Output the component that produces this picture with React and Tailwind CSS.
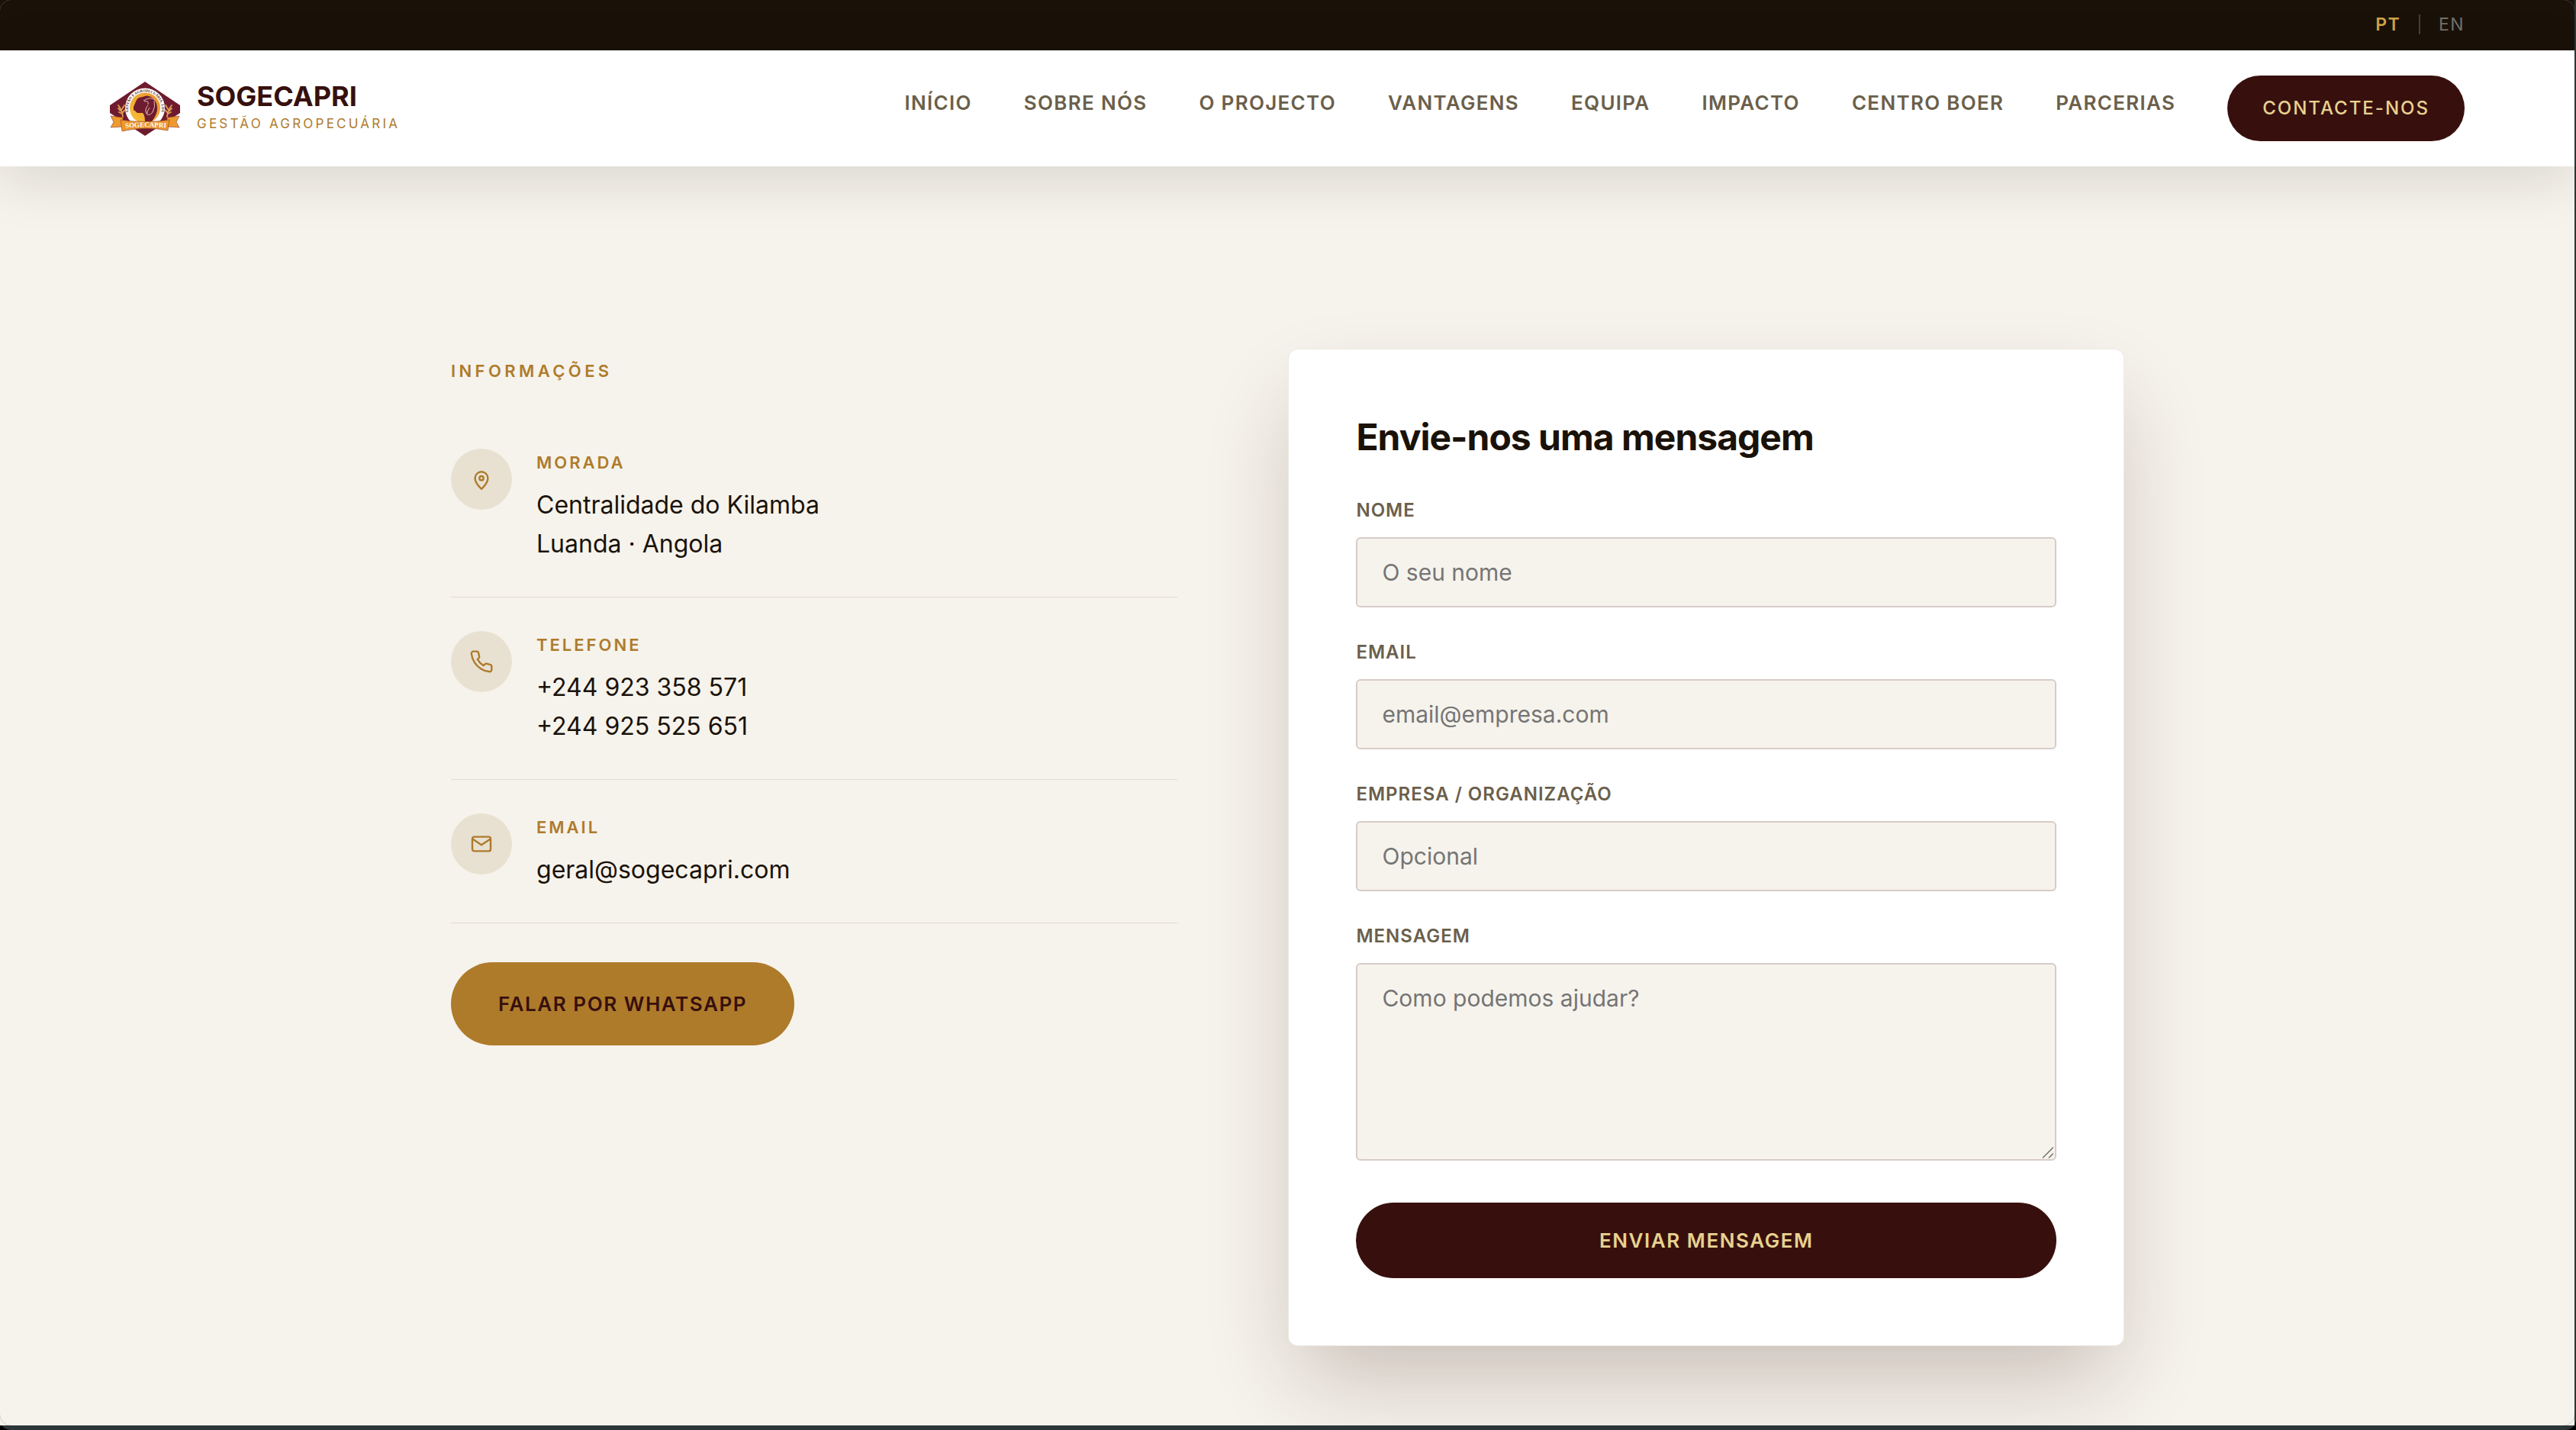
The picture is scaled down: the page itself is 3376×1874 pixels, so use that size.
import { useState } from 'react';

const navItems = [
    { label: 'Início', path: '#inicio' },
    { label: 'Sobre Nós', path: '#sobre' },
    { label: 'O Projecto', path: '#projecto' },
    { label: 'Vantagens', path: '#vantagens' },
    { label: 'Equipa', path: '#equipa' },
    { label: 'Impacto', path: '#impacto' },
    { label: 'Centro Boer', path: '#centro-boer' },
    { label: 'Parcerias', path: '#parcerias' },
];

const PinIcon = () => (
    <svg className="size-8" viewBox="0 0 24 24" fill="none" stroke="currentColor" strokeWidth="1.8">
        <path d="M12 21.500s-6.300-5.500-6.300-10.500a6.300 6.300 0 0 1 12.600 0c0 5-6.300 10.500-6.300 10.500z" />
        <circle cx="12" cy="11" r="2" />
    </svg>
);

const PhoneIcon = () => (
    <svg className="size-8" viewBox="0 0 24 24" fill="none" stroke="currentColor" strokeWidth="1.8" strokeLinejoin="round">
        <path d="M22 16.920v3a2 2 0 0 1-2.180 2 19.790 19.790 0 0 1-8.630-3.070 19.500 19.500 0 0 1-6-6 19.790 19.790 0 0 1-3.070-8.670A2 2 0 0 1 4.110 2h3a2 2 0 0 1 2 1.720c.127.960.361 1.903.700 2.810a2 2 0 0 1-.450 2.110L8.090 9.910a16 16 0 0 0 6 6l1.270-1.270a2 2 0 0 1 2.110-.450c.907.339 1.850.573 2.810.700A2 2 0 0 1 22 16.920z" />
    </svg>
);

const MailIcon = () => (
    <svg className="size-8" viewBox="0 0 24 24" fill="none" stroke="currentColor" strokeWidth="1.8">
        <rect x="3" y="5" width="18" height="14" rx="2" />
        <path d="M3 7l9 6 9-6" />
    </svg>
);

const contacts = [
    { label: 'Morada', lines: ['Centralidade do Kilamba', 'Luanda · Angola'], icon: PinIcon },
    { label: 'Telefone', lines: ['+244 923 358 571', '+244 925 525 651'], icon: PhoneIcon },
    { label: 'Email', lines: ['geral@sogecapri.com'], icon: MailIcon },
];

const fields = [
    { id: 'nome', label: 'Nome', type: 'text', placeholder: 'O seu nome' },
    { id: 'email', label: 'Email', type: 'email', placeholder: 'email@empresa.com' },
    { id: 'empresa', label: 'Empresa / Organização', type: 'text', placeholder: 'Opcional' },
];

function Logo() {
    return (
        <svg className="w-[92px] h-[71px]" viewBox="0 0 92 71">
            <defs>
                <path id="ring-arc" d="M25 42A22 22 0 1 1 67 42" />
                <path id="ribbon-arc" d="M19 61Q46 58 75 60.500" />
                <linearGradient id="gold" x1="0" y1="1" x2="1" y2="0">
                    <stop offset="0" stopColor="#F8C23A" />
                    <stop offset="1" stopColor="#E8912A" />
                </linearGradient>
            </defs>
            <path d="M46 0L92 31V41L46 71L0 41V31Z" fill="#6F1B2F" />
            {/* Ribbon tails */}
            <path d="M1 45L17 47V59L1 60L5 53Z" fill="#EE9A2E" stroke="#8A3A2A" strokeWidth="0.600" />
            <path d="M91 45L75 47V59L91 60L87 53Z" fill="#EE9A2E" stroke="#8A3A2A" strokeWidth="0.600" />
            {/* Wheat */}
            <g fill="none" stroke="#DDA052" strokeWidth="1.800" strokeLinecap="round">
                <path d="M17 46Q16 37 11 31M11 35l3 3M19 31l-3 5M12 40l4 2M20 37l-4 4" />
                <path d="M75 46Q76 37 81 31M81 35l-3 3M73 31l3 5M80 40l-4 2M72 37l4 4" />
            </g>
            {/* Medallion */}
            <circle cx="46" cy="34.500" r="26" fill="#FFF" />
            <circle cx="46" cy="34.500" r="20" fill="url(#gold)" />
            <path d="M31 33L34 26Q36 20 43 20Q50 16 57 22Q63 29 62 38Q60 46 55 52H46Q46 44 43 41L36 41Q33 38 31 37Z" fill="#6F1B2F" />
            <path d="M44 25Q53 19 59 24M45 26Q51 24 50 30M58 25Q60 33 56 40Q51 46 48 42Q45 36 50 31M52 34Q48 39 49 42" fill="none" stroke="#F5E6D8" strokeWidth="0.800" />
            <text className="font-['Liberation_Serif',serif] font-bold" fontSize="4.800" fill="#4B1B25">
                <textPath href="#ring-arc" startOffset="50%" textAnchor="middle">GESTÃO E AGROPECUÁRIA, LDA</textPath>
            </text>
            {/* Ribbon */}
            <path d="M14 50Q46 55 78 50L76 64Q46 58 16 65Z" fill="#EC962D" stroke="#8A3A2A" strokeWidth="0.600" />
            <text className="font-['Liberation_Serif',serif] font-bold" fontSize="9" fill="#FFF">
                <textPath href="#ribbon-arc" startOffset="50%" textAnchor="middle">SOGECAPRI</textPath>
            </text>
        </svg>
    );
}

export default function App() {
    const [lang, setLang] = useState('PT');

    return (
        <div className="min-h-screen flex flex-col bg-black font-['Inter',sans-serif] antialiased text-[#1A1209]">
            <div className="flex-1 flex flex-col rounded-b-[14px] bg-[#2C3537] pr-[2px] pb-[6px]">
                <div className="flex-1 flex flex-col relative overflow-hidden bg-[#F6F3EC]">
                    {/* Window edge, only its corners stay visible */}
                    <span className="absolute -inset-px rounded-[16px] border border-[#8080804D] pointer-events-none" />

                    {/* Top bar */}
                    <div className="h-[66px] px-36 pb-[2px] bg-[#1A1209] flex items-center justify-end gap-6 text-[23px] tracking-[0.06em]">
                        <button type="button" onClick={() => setLang('PT')} className={lang === 'PT' ? 'font-semibold text-[#CFA347]' : 'text-[#74706A]'}>PT</button>
                        <span className="w-[2px] h-[26px] bg-[#483F36]" />
                        <button type="button" onClick={() => setLang('EN')} className={lang === 'EN' ? 'font-semibold text-[#CFA347]' : 'text-[#74706A]'}>EN</button>
                    </div>

                    {/* Header */}
                    <header className="h-[152px] px-36 bg-white flex items-center justify-between shadow-[0_16px_72px_rgba(26,18,8,0.13)]">
                        <a href="#inicio" className="flex items-center gap-[22px]">
                            <Logo />
                            <span className="flex flex-col gap-2 pb-1">
                                <span className="text-4xl leading-9 font-bold text-[#37100D]">SOGECAPRI</span>
                                <span className="text-[17px] leading-5 tracking-[0.19em] uppercase text-[#AE7B2B]">Gestão Agropecuária</span>
                            </span>
                        </a>
                        <nav className="flex items-center gap-[68px]">
                            {navItems.map((item) => (
                                <a key={item.path} href={item.path} className="pb-[14px] text-[26px] leading-8 font-semibold tracking-[0.05em] uppercase text-[#6B5F4B]">
                                    {item.label}
                                </a>
                            ))}
                            <a href="#contacto" className="h-[86px] px-[46px] rounded-full bg-[#37100D] flex items-center text-2xl font-medium tracking-[2px] uppercase text-[#E8D28F]">
                                Contacte-nos
                            </a>
                        </nav>
                    </header>

                    {/* Contact section */}
                    <main className="flex-1 w-full max-w-[2192px] mx-auto pt-60 pb-[105px] grid grid-cols-[952fr_1093fr] gap-[146px] items-start">
                        <section className="pt-[10px]">
                            <h2 className="mb-10 text-[22px] leading-9 font-semibold tracking-[0.2em] uppercase text-[#AE7B2B]">Informações</h2>
                            {contacts.map(({ label, lines, icon: Icon }) => (
                                <div key={label} className="flex items-start gap-8 py-11 border-b border-[#DFDBD4]">
                                    <div className="size-20 rounded-full bg-[#E8E1D2] text-[#AE7B2B] flex items-center justify-center">
                                        <Icon />
                                    </div>
                                    <div>
                                        <h3 className="mb-3 text-[22px] leading-9 font-semibold tracking-[3px] uppercase text-[#AE7B2B]">{label}</h3>
                                        {lines.map((line) => (
                                            <p key={line} className="text-[32px] leading-[51px]">{line}</p>
                                        ))}
                                    </div>
                                </div>
                            ))}
                            <a href="#whatsapp" className="mt-[51px] h-[109px] px-[62px] rounded-full bg-[#AE7B2B] inline-flex items-center text-[26px] font-semibold tracking-[0.06em] uppercase text-[#37100D]">
                                Falar por WhatsApp
                            </a>
                        </section>

                        <form
                            onSubmit={(e) => e.preventDefault()}
                            className="p-[88px] rounded-xl bg-white shadow-[0_0_0_1px_#EDEAE5,0_56px_112px_-16px_rgba(56,16,13,0.24)]"
                        >
                            <h1 className="mb-[51px] text-5xl leading-[53px] font-bold tracking-[-1px]">Envie-nos uma mensagem</h1>
                            {fields.map((field) => (
                                <div key={field.id} className="mb-10">
                                    <label htmlFor={field.id} className="block mb-4 text-2xl leading-[38px] font-semibold tracking-[1px] uppercase text-[#6B5F4B]">
                                        {field.label}
                                    </label>
                                    <input
                                        id={field.id}
                                        type={field.type}
                                        placeholder={field.placeholder}
                                        className="block w-full h-[92px] px-8 rounded-md border-2 border-[#D8CBC7] bg-[#F6F3EC] text-[30px] leading-9 placeholder:text-[#757575]"
                                    />
                                </div>
                            ))}
                            <label htmlFor="mensagem" className="block mb-4 text-2xl leading-[38px] font-semibold tracking-[1px] uppercase text-[#6B5F4B]">
                                Mensagem
                            </label>
                            <div className="relative">
                                <textarea
                                    id="mensagem"
                                    placeholder="Como podemos ajudar?"
                                    className="block w-full h-[259px] px-8 py-[26px] resize-none rounded-md border-2 border-[#D8CBC7] bg-[#F6F3EC] text-[30px] leading-9 placeholder:text-[#757575]"
                                />
                                <svg className="absolute right-1 bottom-[3px] w-[14px] h-[15px]" viewBox="0 0 14 15" fill="none" stroke="#6A6A68" strokeWidth="1.300">
                                    <path d="M0 14.500L14 0.500M8 14.500L14 8.500" />
                                </svg>
                            </div>
                            <button type="submit" className="mt-[55px] w-full h-[99px] rounded-full bg-[#37100D] text-[26px] font-semibold tracking-[0.06em] uppercase text-[#E8D28F]">
                                Enviar mensagem
                            </button>
                        </form>
                    </main>
                </div>
            </div>
        </div>
    );
}
